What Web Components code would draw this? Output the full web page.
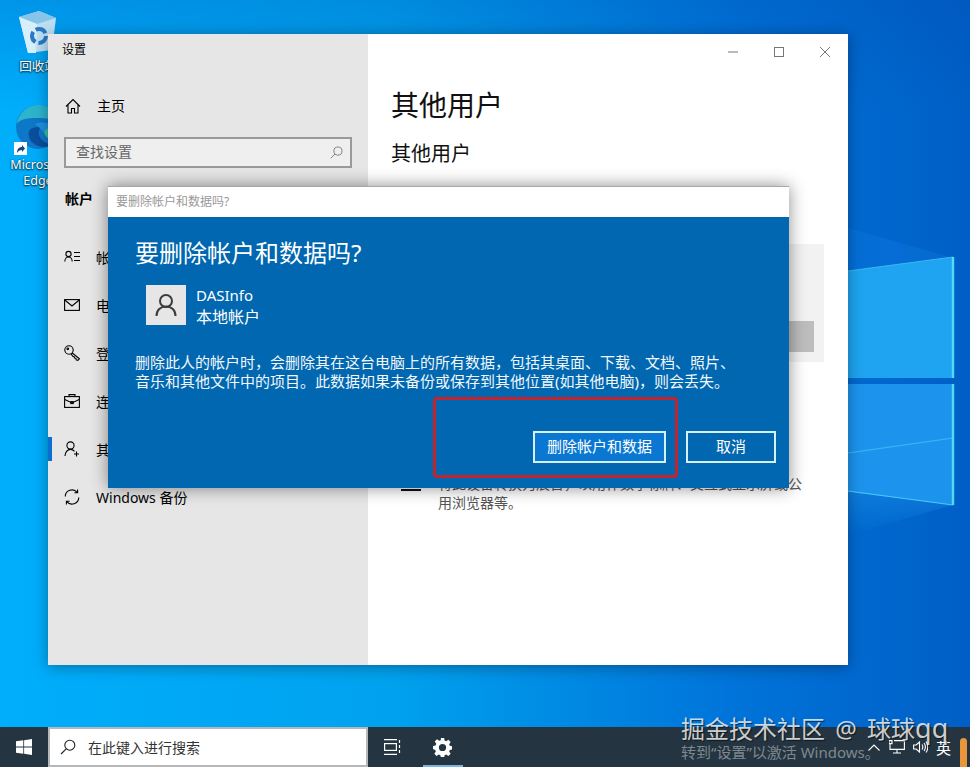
<!DOCTYPE html>
<html lang="zh-CN">
<head>
<meta charset="utf-8">
<title>设置</title>
<style>
  html, body { margin: 0; padding: 0; }
  body {
    width: 970px;
    height: 767px;
    overflow: hidden;
    font-family: "Noto Sans", "Noto Sans CJK SC", sans-serif;
  }
</style>
</head>
<body>
<win-desktop>
  <desktop-icon kind="bin" style="--top:8px;--gap:3px">回收站</desktop-icon>
  <desktop-icon kind="edge" style="--top:103px;--gap:6px">Microsoft Edge</desktop-icon>
  <settings-window></settings-window>
  <confirm-dialog></confirm-dialog>
  <task-bar></task-bar>
</win-desktop>

<script>
const ICONS = {
  home: `<path d="M1 8.500 8 1.500l7 7M3 6.500V15h3.500v-4.500h3V15H13V6.500"/>`,
  contact: `<circle cx="4.500" cy="5" r="2.600"/><path d="M.8 12.500c0-2.600 1.600-4.600 3.700-4.600s3.700 2 3.700 4.600M10 3.500h6M10 7.500h6M10 11.500h6"/>`,
  mail: `<rect x=".6" y="2.600" width="14.800" height="10.800"/><path d="M.8 3 8 9l7.200-6"/>`,
  key: `<circle cx="5" cy="5" r="4.200"/><circle cx="3.800" cy="3.800" r=".8"/><path d="M8 7.800l7.400 6-1.600 1.600-1.600-.6-.3-1.500-1.500-.2-.2-1.500-1.500-.3L7 8.600"/>`,
  briefcase: `<rect x=".6" y="3.600" width="14.800" height="10.800"/><path d="M5 3.500V1.600h6v1.900M.8 6.500 8 10l7.200-3.500"/><rect x="6.800" y="8.600" width="2.400" height="2"/>`,
  adduser: `<circle cx="6.500" cy="4.500" r="3.600"/><path d="M1 15c0-3.600 2.400-6.600 5.500-6.600 1.600 0 3 .8 4 2M12.500 10.500v5M10 13h5"/>`,
  sync: `<path d="M1.200 7.500A6.800 6.800 0 0 1 13.200 3.400M14.800 8.500A6.800 6.800 0 0 1 2.800 12.600M13.600.6v3.200h-3.200M2.400 15.400v-3.200h3.200"/>`,
  search: `<circle cx="9.800" cy="6.200" r="5"/><path d="M6.200 9.800 1 15"/>`
};

function icon(name, size) {
  return `<svg width="${size}" height="${size}" viewBox="0 0 16 16" fill="none" stroke="currentColor" stroke-width="1.100">${ICONS[name]}</svg>`;
}

class WinDesktop extends HTMLElement {
  constructor() {
    super();
    this.shadowDOM = this.attachShadow({ mode: "open" });
    this.shadowDOM.innerHTML = `
      <style>
        :host {
          display: block;
          position: relative;
          width: 970px;
          height: 767px;
          overflow: hidden;
          background:
            linear-gradient(180deg, rgba(0,70,170,.24) 0, rgba(0,70,170,0) 110px),
            linear-gradient(90deg, #00aefc 0%, #00a2ee 40%, #0074da 75%, #005fc6 100%);
        }
        svg { position: absolute; left: 0; top: 0; }
      </style>
      <svg width="970" height="767" viewBox="0 0 970 767">
        <defs>
          <linearGradient id="ray" x1="0" y1="0" x2="0" y2="1">
            <stop offset="0" stop-color="#1a8ee8" stop-opacity=".5"/>
            <stop offset="1" stop-color="#1a8ee8" stop-opacity="0"/>
          </linearGradient>
        </defs>
        <polygon points="848,228 953,258 848,271" fill="#0f7be6" opacity=".35"/>
        <polygon points="848,492 953,505 848,535" fill="url(#ray)"/>
        <polygon points="840,272 953,257 953,378 840,378" fill="#1ea4f0"/>
        <polygon points="840,384 953,384 953,505 840,491" fill="#1c94ee"/>
        <polyline points="848,453 953,438" stroke="#3cb8f4" stroke-width="1.200" fill="none"/>
        <polyline points="848,491 953,505" stroke="#4cc8f6" stroke-width="1.200" fill="none"/>
        <polyline points="848,271 953,257" stroke="#3ab8f2" stroke-width="1" fill="none"/>
        <path d="M953 257V378M953 384V505" stroke="#52dcf4" stroke-width="2.400" fill="none"/>
      </svg>
      <slot></slot>`;
  }
}

class DesktopIcon extends HTMLElement {
  constructor() {
    super();
    this.shadowDOM = this.attachShadow({ mode: "open" });
  }

  connectedCallback() {
    const isEdge = this.getAttribute("kind") === "edge";
    const bin = `
      <svg width="40" height="44" viewBox="0 0 40 44" style="margin-top:2px">
        <polygon points="1,7 21,1 38,8 34,40 10,43" fill="#bcdff3"/>
        <polygon points="1,7 21,1 38,8 19,14" fill="#86c4e8"/>
        <polygon points="1,7 19,14 18,43 10,43" fill="#d8eef9"/>
        <circle cx="21" cy="26" r="7" fill="none" stroke="#2a78c6" stroke-width="4" stroke-dasharray="11.500 3.160"/>
      </svg>`;
    const edge = `
      <svg width="46" height="48" viewBox="0 0 46 48">
        <circle cx="23" cy="24" r="22" fill="#0d78c8"/>
        <path d="M1.500 21C4 9 13 2 24 2c11 0 20 9 21 22-5-6-11-9-19-9C15 15 6 15 1.500 21z" fill="#2cb4cc"/>
        <path d="M45 24c.5 5 0 9-3 13-6 1-12-2-13-8 1-6 10-9 16-5z" fill="#3cbaa8"/>
        <path d="M14 28c-2 8 4 15 14 16 4 0 8-1 12-3-8 1-14-3-16-9-1-3 0-6 2-8-4 0-10 0-12 4z" fill="#0a4f9e"/>
        <path d="M20 21c7-3 18-1 23 5-5-3-12-1-15 3-2-3-5-6-8-8z" fill="#1c92e2"/>
      </svg>`;
    const arrow = isEdge
      ? `<svg class="arrow" width="13" height="13" viewBox="0 0 13 13"><rect width="13" height="13" fill="#fff"/><path d="M3 11c0-4 2-6 5-6V3l3 3.600L8 10V8c-2 0-4 1-5 3z" fill="#16487c"/></svg>`
      : "";
    this.shadowDOM.innerHTML = `
      <style>
        :host {
          position: absolute;
          left: 0;
          top: var(--top);
          width: 76px;
          display: flex;
          flex-direction: column;
          align-items: center;
          gap: var(--gap);
          color: #fff;
          font-size: 12.500px;
          line-height: 16px;
          text-align: center;
          text-shadow: 0 1px 2px rgba(0,0,0,.8), 0 0 2px rgba(0,0,0,.6);
        }
        .pic { position: relative; height: 48px; margin-left: ${isEdge ? "-1px" : "0"}; }
        .arrow { position: absolute; left: -1px; bottom: -4px; }
      </style>
      <div class="pic">${isEdge ? edge : bin}${arrow}</div>
      <div><slot></slot></div>`;
  }
}

class NavItem extends HTMLElement {
  constructor() {
    super();
    this.shadowDOM = this.attachShadow({ mode: "open" });
  }

  connectedCallback() {
    this.shadowDOM.innerHTML = `
      <style>
        :host {
          display: flex;
          position: relative;
          align-items: center;
          gap: 16px;
          height: 48px;
          padding-left: 16px;
          color: #000;
          font-size: 14px;
        }
        :host([selected])::before {
          content: "";
          position: absolute;
          left: 0;
          top: 12px;
          width: 4px;
          height: 24px;
          background: #0a6fd1;
        }
        svg { flex: none; }
      </style>
      ${icon(this.getAttribute("icon"), 16)}
      <span><slot></slot></span>`;
  }
}

class SearchBox extends HTMLElement {
  constructor() {
    super();
    this.shadowDOM = this.attachShadow({ mode: "open" });
    this.shadowDOM.innerHTML = `
      <style>
        :host {
          display: flex;
          align-items: center;
          justify-content: space-between;
          box-sizing: border-box;
          height: 31px;
          margin: 0 16px;
          padding: 0 7px 0 10px;
          background: #efefef;
          border: 2px solid #999;
          color: #666;
          font-size: 14px;
        }
        span { margin-top: -3px; }
        svg { color: #777; }
      </style>
      <span><slot></slot></span>
      ${icon("search", 13)}`;
  }
}

class SettingsWindow extends HTMLElement {
  constructor() {
    super();
    this.shadowDOM = this.attachShadow({ mode: "open" });
    this.render();
  }

  render() {
    this.shadowDOM.innerHTML = `
      <style>
        :host {
          position: absolute;
          left: 48px;
          top: 34px;
          width: 800px;
          height: 631px;
          display: grid;
          grid-template-columns: 320px 480px;
          background: #fff;
          box-shadow: 0 2px 14px rgba(0,0,0,.35);
          color: #000;
        }
        .side { background: #e6e6e6; }
        .app-title { height: 31px; line-height: 31px; padding-left: 14px; font-size: 12px; }
        .home { margin-top: 21px; height: 40px; display: flex; align-items: center; gap: 16px; padding-left: 17px; font-size: 14px; }
        .home span { margin-top: -2px; }
        search-box { margin-top: 11px; }
        .group { height: 40px; line-height: 40px; margin-top: 11px; margin-bottom: 14px; padding-left: 17px; font-size: 14px; font-weight: 700; }
        .main { display: flex; flex-direction: column; padding: 0 24px; position: relative; }
        .caption { display: flex; justify-content: flex-end; height: 36px; margin-right: -24px; color: #777; }
        .caption div { width: 46px; display: flex; align-items: center; justify-content: center; }
        h1 { margin: 15px 0 0 -1px; font-size: 28px; font-weight: 400; line-height: 40px; color: #111; }
        h2 { margin: 15px 0 0 -1px; font-size: 20px; font-weight: 400; line-height: 28px; color: #111; }
        .panel {
          box-sizing: border-box;
          margin-top: 76px;
          height: 118px;
          background: #f2f2f2;
          display: flex;
          justify-content: flex-end;
          align-items: flex-end;
          padding: 0 10px 10px;
        }
        .panel div { width: 200px; height: 31px; background: #bdbdbd; }
        .kiosk { display: flex; gap: 16px; margin-top: 112px; padding-left: 8px; }
        .kiosk svg { flex: none; margin-top: 1px; }
        .kiosk p { width: 366px; margin: 0; font-size: 14px; line-height: 19px; color: #555; }
      </style>
      <div class="side">
        <div class="app-title">设置</div>
        <div class="home">${icon("home", 16)}<span>主页</span></div>
        <search-box>查找设置</search-box>
        <div class="group">帐户</div>
        <nav-item icon="contact">帐户信息</nav-item>
        <nav-item icon="mail">电子邮件和帐户</nav-item>
        <nav-item icon="key">登录选项</nav-item>
        <nav-item icon="briefcase">连接工作或学校帐户</nav-item>
        <nav-item icon="adduser" selected>其他用户</nav-item>
        <nav-item icon="sync">Windows 备份</nav-item>
      </div>
      <div class="main">
        <div class="caption">
          <div><svg width="12" height="12" viewBox="0 0 12 12"><path d="M1 6h10" stroke="currentColor"/></svg></div>
          <div><svg width="12" height="12" viewBox="0 0 12 12"><rect x="1.500" y="1.500" width="9" height="9" fill="none" stroke="currentColor"/></svg></div>
          <div><svg width="12" height="12" viewBox="0 0 12 12"><path d="M1 1l10 10M11 1 1 11" stroke="currentColor"/></svg></div>
        </div>
        <h1>其他用户</h1>
        <h2>其他用户</h2>
        <div class="panel"><div></div></div>
        <div class="kiosk">
          <svg width="22" height="18" viewBox="0 0 22 18"><path d="M1 15h20" stroke="#111" stroke-width="2"/></svg>
          <p>将此设备转换为展台&#xFF0C;以用作数字标牌、交互式显示屏或公用浏览器等。</p>
        </div>
      </div>`;
  }
}

class ConfirmDialog extends HTMLElement {
  constructor() {
    super();
    this.shadowDOM = this.attachShadow({ mode: "open" });
    this.render();
  }

  render() {
    this.shadowDOM.innerHTML = `
      <style>
        :host {
          position: absolute;
          left: 108px;
          top: 186px;
          width: 681px;
          height: 302px;
          display: flex;
          flex-direction: column;
          box-shadow: 0 0 16px rgba(0,0,0,.45);
          color: #fff;
        }
        .bar {
          box-sizing: border-box;
          height: 31px;
          line-height: 30px;
          padding-left: 8px;
          background: #fff;
          border-top: 1px solid #a8a8a8;
          color: #999;
          font-size: 12px;
        }
        .body {
          flex: 1;
          display: flex;
          flex-direction: column;
          padding: 20px 13px 25px 27px;
          background: #0067b0;
        }
        h3 { margin: 0; font-size: 24px; font-weight: 400; line-height: 32px; }
        .user { display: flex; align-items: flex-start; gap: 10px; margin: 16px 0 0 11px; height: 40px; }
        .avatar { width: 40px; height: 40px; display: flex; align-items: center; justify-content: center; background: #e6e6e6; color: #3c3c3c; }
        .who { font-size: 15px; line-height: 22px; margin-top: -1px; }
        .who span { font-size: 16px; }
        p { margin: 28px 0 0; font-size: 15px; line-height: 19px; white-space: nowrap; color: #f2f8fc; }
        .actions { margin-top: auto; display: flex; justify-content: flex-end; gap: 20px; position: relative; }
        .actions div {
          box-sizing: border-box;
          height: 32px;
          line-height: 27px;
          text-align: center;
          border: 2px solid #d4f0f8;
          font-size: 15px;
        }
        .primary { width: 133px; background: #0a78d2; }
        .cancel { width: 90px; }
        .mark {
          position: absolute;
          left: 325px;
          top: 211px;
          width: 245px;
          height: 81px;
          box-sizing: border-box;
          border: 3px solid #c2242f;
          border-radius: 4px;
        }
      </style>
      <div class="bar">要删除帐户和数据吗?</div>
      <div class="body">
        <h3>要删除帐户和数据吗?</h3>
        <div class="user">
          <div class="avatar">
            <svg width="24" height="24" viewBox="0 0 24 24" fill="none" stroke="currentColor" stroke-width="2"><circle cx="12" cy="8" r="6"/><path d="M2.500 23c0-6 4-9.500 9.500-9.500s9.500 3.500 9.500 9.500"/></svg>
          </div>
          <div class="who">DASInfo<br><span>本地帐户</span></div>
        </div>
        <p>删除此人的帐户时&#xFF0C;会删除其在这台电脑上的所有数据&#xFF0C;包括其桌面、下载、文档、照片、<br>音乐和其他文件中的项目。此数据如果未备份或保存到其他位置(如其他电脑)&#xFF0C;则会丢失。</p>
        <div class="actions">
          <div class="primary">删除帐户和数据</div>
          <div class="cancel">取消</div>
        </div>
      </div>
      <div class="mark"></div>`;
  }
}

class TaskBar extends HTMLElement {
  constructor() {
    super();
    this.shadowDOM = this.attachShadow({ mode: "open" });
    this.render();
  }

  render() {
    this.shadowDOM.innerHTML = `
      <style>
        :host {
          position: absolute;
          left: 0;
          bottom: 0;
          width: 970px;
          height: 40px;
          display: flex;
          align-items: center;
          background: #243541;
          color: #fff;
        }
        .start { width: 48px; height: 40px; display: flex; align-items: center; justify-content: center; }
        .find {
          box-sizing: border-box;
          width: 320px;
          height: 40px;
          display: flex;
          align-items: center;
          gap: 12px;
          padding-left: 10px;
          background: #fff;
          border: 2px solid #b4b8ba;
          color: #333;
          font-size: 14px;
        }
        .btn { height: 40px; display: flex; align-items: center; justify-content: center; position: relative; }
        .view { width: 48px; }
        .gear { width: 52px; }
        .gear::after { content: ""; position: absolute; left: 7px; right: 5px; bottom: 0; height: 2px; background: #7db4e0; }
        .tray { margin-left: auto; display: flex; align-items: center; height: 40px; position: relative; }
        .tray svg { flex: none; }
        .lang { font-size: 15px; margin-left: 8px; }
        .pill { width: 7px; height: 29px; align-self: flex-end; margin: 0 3px 0 9px; border-radius: 4px 4px 0 0; background: #e8963c; }
        .mark { position: absolute; left: 681px; top: -14px; font-size: 24px; line-height: 30px; word-spacing: 4px; white-space: nowrap; color: rgba(255,255,255,.78); text-shadow: 1px 1px 1px rgba(0,0,0,.6); }
        .mark span { font-size: 27px; }
        .activate { position: absolute; left: 681px; top: 15px; font-size: 15px; line-height: 20px; white-space: nowrap; color: rgba(255,255,255,.42); }
      </style>
      <div class="start">
        <svg width="16" height="16" viewBox="0 0 16 16" fill="#fff"><path d="M0 2.300 7.300 1.300V7.600H0zM8.100 1.200 16 0V7.600H8.100zM0 8.400H7.300V14.700L0 13.700zM8.100 8.400H16V16L8.100 14.800z"/></svg>
      </div>
      <div class="find">
        <span style="display:flex;color:#222">${icon("search", 16)}</span>
        <span>在此键入进行搜索</span>
      </div>
      <div class="btn view">
        <svg width="17" height="16" viewBox="0 0 17 16" fill="none" stroke="#fff" stroke-width="1.200"><path d="M0 .6h13M0 15.400h13"/><rect x=".6" y="4.600" width="11.800" height="6.800"/><path d="M15.500 1v3M15.500 6v3M15.500 11v3"/></svg>
      </div>
      <div class="btn gear">
        <svg width="19" height="19" viewBox="0 0 20 20"><path fill="#fff" fill-rule="evenodd" d="M8.300 0h3.400l.5 2.700 1.700.7 2.300-1.600 2.400 2.400-1.600 2.300.7 1.700 2.700.5v3.400l-2.700.5-.7 1.700 1.600 2.300-2.400 2.400-2.300-1.600-1.700.7-.5 2.700H8.300l-.5-2.700-1.700-.7-2.300 1.600-2.400-2.400 1.600-2.300-.7-1.700L0 11.700V8.300l2.700-.5.700-1.700-1.600-2.300 2.400-2.400 2.300 1.600 1.700-.7zM10 6.200a3.800 3.800 0 1 0 0 7.600 3.800 3.800 0 0 0 0-7.600z"/></svg>
      </div>
      <div class="tray">
        <svg width="12" height="7" viewBox="0 0 12 7" fill="none" stroke="#fff" stroke-width="1.100" style="margin-right:9px"><path d="M.5 6.500 6 1l5.500 5.500"/></svg>
        <svg width="16" height="14" viewBox="0 0 16 14" fill="none" stroke="#fff" stroke-width="1.100" style="margin-right:8px"><path d="M5 .6h10.400v8.800H1V4"/><path d="M0 .6h3v3H0zM8 9.500v3M4 13h8"/></svg>
        <svg width="15" height="14" viewBox="0 0 15 14" fill="none" stroke="#fff" stroke-width="1.100"><path d="M.6 5v4h2.500L6.500 12V2L3.100 5zM9 4.500c1 1.500 1 3.500 0 5M11 3c1.700 2.400 1.700 5.600 0 8M13 1.500c2.300 3.400 2.300 7.600 0 11"/></svg>
        <span class="lang">英</span>
        <div class="pill"></div>
      </div>
      <div class="mark">掘金技术社区 @ 球球<span>qq</span></div>
      <div class="activate">转到“设置”以激活 Windows。</div>`;
  }
}

customElements.define("win-desktop", WinDesktop);
customElements.define("desktop-icon", DesktopIcon);
customElements.define("nav-item", NavItem);
customElements.define("search-box", SearchBox);
customElements.define("settings-window", SettingsWindow);
customElements.define("confirm-dialog", ConfirmDialog);
customElements.define("task-bar", TaskBar);
</script>
</body>
</html>
